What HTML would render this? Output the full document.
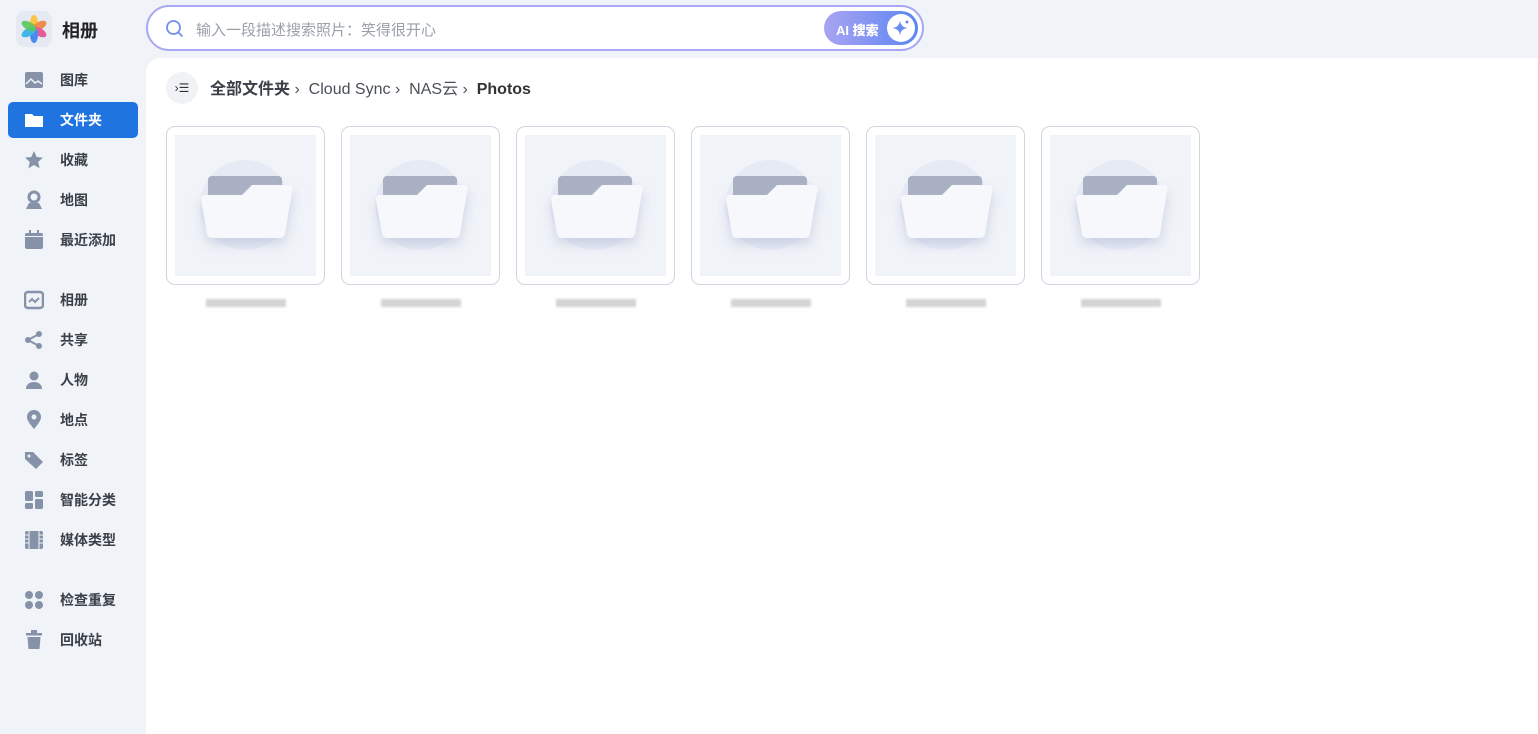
<!DOCTYPE html>
<html><head><meta charset="utf-8"><style>
*{margin:0;padding:0;box-sizing:border-box}
body{width:1538px;height:734px;background:#f0f3f8;font-family:"Liberation Sans","Noto Sans CJK SC",sans-serif;position:relative;overflow:hidden;color:#333}
.logo{position:absolute;left:16px;top:11px;width:36px;height:36px;border-radius:9px;background:#e4e9f2}
.brand{position:absolute;left:62px;top:17px;font-size:18px;font-weight:bold;color:#222}
.nav{position:absolute;left:8px;width:130px;height:36px;border-radius:5px;font-size:14px;font-weight:bold;color:#3a3f48;display:flex;align-items:center}
.nav svg{position:absolute;left:16px;top:8px}
.nav span{position:absolute;left:52px}
.nav.act{background:#1f74e0;color:#fff}
.search{position:absolute;left:146px;top:5px;width:778px;height:46px;border:2px solid #a9a8f5;border-radius:23px;background:#fff}
.search .ph{position:absolute;left:48px;top:12px;font-size:15px;color:#9aa0aa}
.ai{position:absolute;right:4px;top:4px;width:94px;height:34px;border-radius:17px;background:linear-gradient(90deg,#a9a4f2,#5b86f2);color:#fff;font-size:13px;font-weight:bold}
.ai b{position:absolute;left:12px;top:9px}
.ai i{position:absolute;right:3px;top:3px;width:28px;height:28px;border-radius:50%;background:#fff}
.main{position:absolute;left:146px;top:58px;right:0;bottom:0;background:#fff;border-top-left-radius:14px}
.tog{position:absolute;left:20px;top:14px;width:32px;height:32px;border-radius:50%;background:#f0f2f5;font-size:12px;text-align:center;line-height:32px;color:#333}
.bc{position:absolute;left:64px;top:17px;font-size:16px;color:#4a4f58}
.card{position:absolute;top:68px;width:159px;height:159px;border:1px solid #cfd6e0;border-radius:9px}
.card .in{position:absolute;left:8px;top:8px;width:141px;height:141px;background:#f0f3f8}
.lab{position:absolute;top:238px;width:159px;text-align:center;font-size:12px;color:#aaa}
.lab i{display:inline-block;width:80px;height:8px;background:#d4d4d4;filter:blur(1px)}
</style></head><body>
<div class="logo"><svg width="36" height="36" viewBox="0 0 36 36"><g transform="translate(18 18)"><ellipse rx="4" ry="8" cy="-6" fill="#f7c646"/><ellipse rx="4" ry="8" cy="-6" fill="#f08b4a" transform="rotate(60)"/><ellipse rx="4" ry="8" cy="-6" fill="#e55c9a" transform="rotate(120)"/><ellipse rx="4" ry="8" cy="-6" fill="#4a8af0" transform="rotate(180)"/><ellipse rx="4" ry="8" cy="-6" fill="#3fb6e6" transform="rotate(240)"/><ellipse rx="4" ry="8" cy="-6" fill="#5cc75c" transform="rotate(300)" opacity=".9"/></g></svg></div>
<div class="brand">相册</div>

<div class="nav" style="top:62px"><svg width="20" height="20"><rect x="1" y="2" width="18" height="16" rx="2" fill="#8592a8"/><path d="M2 14l5-5 4 4 3-2 4 3" stroke="#f0f3f8" stroke-width="1.5" fill="none"/></svg><span>图库</span></div>
<div class="nav act" style="top:102px"><svg width="20" height="20"><path d="M1 4h7l2 2h9v11H1z" fill="#fff"/></svg><span>文件夹</span></div>
<div class="nav" style="top:142px"><svg width="20" height="20"><path d="M10 1l2.7 6 6.3.6-4.8 4.3 1.4 6.3L10 15l-5.6 3.2 1.4-6.3L1 7.6 7.3 7z" fill="#8592a8"/></svg><span>收藏</span></div>
<div class="nav" style="top:182px"><svg width="20" height="20"><circle cx="10" cy="7" r="5" fill="none" stroke="#8592a8" stroke-width="3"/><path d="M2 19l3-6h10l3 6z" fill="#8592a8"/></svg><span>地图</span></div>
<div class="nav" style="top:222px"><svg width="20" height="20"><rect x="1" y="3" width="18" height="16" rx="2" fill="#8592a8"/><rect x="5" y="0" width="2" height="4" fill="#8592a8"/><rect x="13" y="0" width="2" height="4" fill="#8592a8"/><rect x="1" y="6" width="18" height="1" fill="#f0f3f8"/></svg><span>最近添加</span></div>
<div class="nav" style="top:282px"><svg width="20" height="20"><rect x="1" y="2" width="18" height="16" rx="3" fill="none" stroke="#8592a8" stroke-width="2.5"/><path d="M5 12l3-3 3 3 4-4" stroke="#8592a8" stroke-width="2" fill="none"/></svg><span>相册</span></div>
<div class="nav" style="top:322px"><svg width="20" height="20"><circle cx="15" cy="4" r="3" fill="#8592a8"/><circle cx="4" cy="10" r="3" fill="#8592a8"/><circle cx="15" cy="16" r="3" fill="#8592a8"/><path d="M15 4L4 10l11 6" stroke="#8592a8" stroke-width="2" fill="none"/></svg><span>共享</span></div>
<div class="nav" style="top:362px"><svg width="20" height="20"><circle cx="10" cy="6" r="4.5" fill="#8592a8"/><path d="M2 19c0-5 4-7 8-7s8 2 8 7z" fill="#8592a8"/></svg><span>人物</span></div>
<div class="nav" style="top:402px"><svg width="20" height="20"><path d="M10 19C5 13 3 10 3 7a7 7 0 0114 0c0 3-2 6-7 12z" fill="#8592a8"/><circle cx="10" cy="7" r="2.5" fill="#f0f3f8"/></svg><span>地点</span></div>
<div class="nav" style="top:442px"><svg width="20" height="20"><path d="M1 2h8l10 10-7 7L1 9z" fill="#8592a8"/><circle cx="5" cy="6" r="1.5" fill="#f0f3f8"/></svg><span>标签</span></div>
<div class="nav" style="top:482px"><svg width="20" height="20" fill="#8592a8"><rect x="1" y="1" width="8" height="10" rx="1.5"/><rect x="11" y="1" width="8" height="6" rx="1.5"/><rect x="1" y="13" width="8" height="6" rx="1.5"/><rect x="11" y="9" width="8" height="10" rx="1.5"/></svg><span>智能分类</span></div>
<div class="nav" style="top:522px"><svg width="20" height="20"><rect x="1" y="1" width="18" height="18" rx="2" fill="#8592a8"/><path d="M5 1v18M15 1v18" stroke="#f0f3f8" stroke-width="1"/><path d="M1 5h4M1 9h4M1 13h4M15 5h4M15 9h4M15 13h4" stroke="#f0f3f8"/></svg><span>媒体类型</span></div>
<div class="nav" style="top:582px"><svg width="20" height="20" fill="#8592a8"><circle cx="5" cy="5" r="4"/><circle cx="15" cy="5" r="4"/><circle cx="5" cy="15" r="4"/><circle cx="15" cy="15" r="4"/></svg><span>检查重复</span></div>
<div class="nav" style="top:622px"><svg width="20" height="20" fill="#8592a8"><rect x="2" y="3" width="16" height="2.5"/><rect x="7" y="0" width="6" height="3"/><path d="M3.5 7h13l-1 12h-11z"/></svg><span>回收站</span></div>

<div class="search"><svg style="position:absolute;left:17px;top:12px" width="20" height="20"><circle cx="8.5" cy="8.5" r="6.5" fill="none" stroke="#6f8ef0" stroke-width="1.8"/><path d="M13.5 13.5l4 4" stroke="#6f8ef0" stroke-width="1.8"/></svg><div class="ph">输入一段描述搜索照片：笑得很开心</div>
<div class="ai"><b>AI 搜索</b><i><svg width="28" height="28"><path d="M13 7q1 6 7 7q-6 1-7 7q-1-6-7-7q6-1 7-7z" fill="#6c8cf0"/><circle cx="20" cy="8" r="1.5" fill="#6c8cf0"/></svg></i></div></div>

<div class="main">
<div class="tog">›☰</div>
<div class="bc"><b style="color:#3a3f48">全部文件夹</b> ›&nbsp;&nbsp;Cloud Sync ›&nbsp;&nbsp;NAS云 ›&nbsp;&nbsp;<b style="color:#333">Photos</b></div>
</div>
<div id="cards"></div>
<script>
var xs=[166,341,516,691,866,1041],h='';
xs.forEach(function(x){h+='<div class="card" style="left:'+x+'px;top:126px"><div class="in"><svg width="141" height="141" viewBox="0 0 141 141"><defs><filter id="s'+x+'" x="-30%" y="-30%" width="160%" height="170%"><feDropShadow dx="0" dy="6" stdDeviation="6" flood-color="#b4bed6" flood-opacity=".6"/></filter></defs><circle cx="70" cy="70" r="45" fill="#e6eaf5"/><rect x="33" y="41" width="74" height="40" rx="4" fill="#a9b0c2"/><path d="M29 60h38l10-10h37q4 0 3.5 4L110 99q-1 4-5 4H37q-4 0-5-4l-6-35q0-4 3-4z" fill="#f7f8fb" filter="url(#s'+x+')"/></svg></div></div><div class="lab" style="left:'+x+'px;top:296px"><i></i></div>';});
document.getElementById('cards').innerHTML=h;
</script>
</body></html>
